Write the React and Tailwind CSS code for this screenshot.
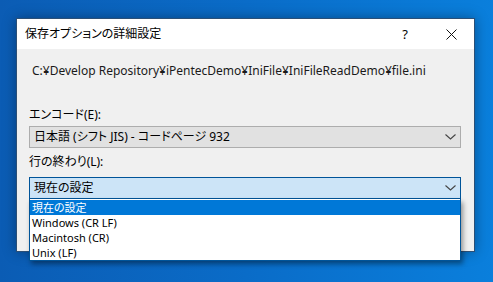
import React from 'react';

const FONT = "font-['Noto_Sans','Noto_Sans_CJK_JP',sans-serif] [font-feature-settings:'palt']";

const options = ['現在の設定', 'Windows (CR LF)', 'Macintosh (CR)', 'Unix (LF)'];

const Chevron = () => (
    <svg width="11" height="6" viewBox="0 0 11 6" className="shrink-0">
        <path d="M0.5 0.5 L5.5 5 L10.5 0.5" fill="none" stroke="#444" strokeWidth="1.1" />
    </svg>
);

const App = () => {
    return (
        <div className={`w-[493px] h-[282px] overflow-hidden bg-gradient-to-r from-[#0b5cb4] via-[#0a6cc8] to-[#0a7fdc] pt-[18px] pl-[16px] ${FONT} text-[12px] leading-[16px] text-black`}>
            {/* ダイアログ本体 */}
            <div className="w-[459px] h-[234px] border border-[#2b4f76] bg-[#f0f0f0] shadow-[0_0_12px_rgba(0,0,0,0.35)] flex flex-col">
                <div className="h-[30px] bg-white flex items-center pl-[8px] shrink-0">
                    <span className="flex-1">保存オプションの詳細設定</span>
                    <span className="w-[46px] text-center text-[13px]">?</span>
                    <span className="w-[46px] flex justify-center">
                        <svg width="11" height="11" viewBox="0 0 11 11">
                            <path d="M0.5 0.5 L10.5 10.5 M10.5 0.5 L0.5 10.5" stroke="#111" strokeWidth="1" />
                        </svg>
                    </span>
                </div>

                <div className="pl-[12px] pt-[14px]">
                    <p className="pl-[3px] text-[#1a1a1a]">C:¥Develop Repository¥iPentecDemo¥IniFile¥IniFileReadDemo¥file.ini</p>

                    <p className="mt-[28px]">エンコード(E):</p>
                    <div className="mt-[3px] w-[432px] h-[22px] border border-[#adadad] bg-[#e1e1e1] flex items-center pl-[4px] pr-[4px]">
                        <span className="flex-1">日本語 (シフト JIS) - コードページ 932</span>
                        <Chevron />
                    </div>

                    <p className="mt-[6px]">行の終わり(L):</p>
                    <div className="relative mt-[7px] w-[432px]">
                        <div className="h-[22px] border border-[#005499] bg-[#cce4f7] flex items-center pl-[4px] pr-[4px]">
                            <span className="flex-1">現在の設定</span>
                            <Chevron />
                        </div>
                        {/* ドロップダウンリスト */}
                        <ul className="absolute left-0 top-full w-[432px] border border-[#005499] border-t-0 bg-white shadow-[2px_3px_5px_rgba(0,0,0,0.4)] pt-[1px] text-[11px]">
                            {options.map((o, i) => (
                                <li
                                    key={o}
                                    className={`h-[15px] leading-[15px] pl-[2px] ${i === 0 ? 'bg-[#0078d7] text-white' : ''}`}
                                >
                                    {o}
                                </li>
                            ))}
                        </ul>
                    </div>
                </div>
            </div>
        </div>
    );
};

export default App;
